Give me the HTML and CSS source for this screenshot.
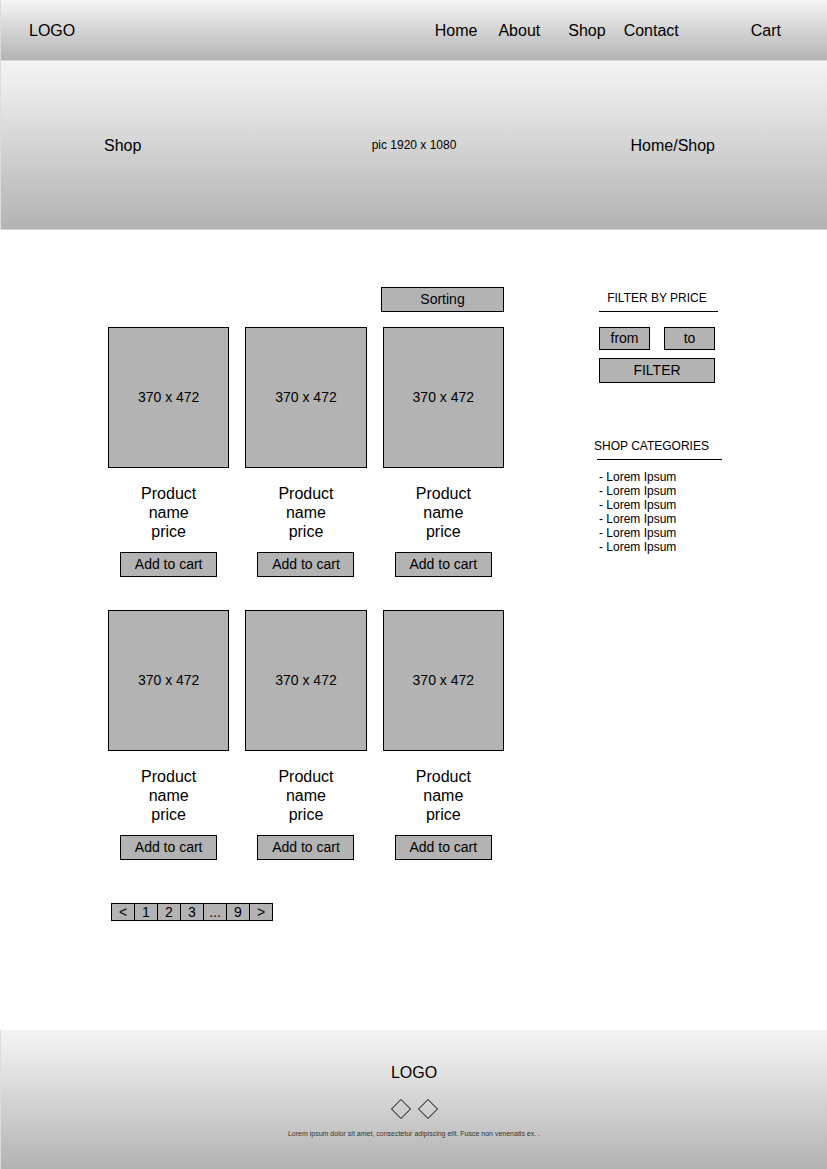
FILE: index.html
```html
<!DOCTYPE html>
<html lang="en">
<head>
  <meta charset="utf-8">
  <meta name="viewport" content="width=device-width, initial-scale=1">
  <title>Shop</title>
  <link rel="stylesheet" href="styles.css">
</head>
<body>
  <header class="site-header">
    <a class="logo" href="#">LOGO</a>
    <nav class="nav">
      <a class="nav-home" href="#">Home</a>
      <a href="#">About</a>
      <a class="nav-shop" href="#">Shop</a>
      <a href="#">Contact</a>
      <a class="nav-cart" href="#">Cart</a>
    </nav>
  </header>

  <section class="hero">
    <h1 class="hero-title">Shop</h1>
    <p class="hero-note">pic 1920 x 1080</p>
    <a class="hero-crumb" href="#">Home/Shop</a>
  </section>

  <main class="main">
    <section class="catalog">
      <select class="box sorting" aria-label="Sorting">
        <option>Sorting</option>
      </select>

      <div class="products">
        <article class="product">
          <div class="product-image">370 x 472</div>
          <p class="product-text">Product<br>name<br>price</p>
          <button class="box add" type="button">Add to cart</button>
        </article>
        <article class="product">
          <div class="product-image">370 x 472</div>
          <p class="product-text">Product<br>name<br>price</p>
          <button class="box add" type="button">Add to cart</button>
        </article>
        <article class="product">
          <div class="product-image">370 x 472</div>
          <p class="product-text">Product<br>name<br>price</p>
          <button class="box add" type="button">Add to cart</button>
        </article>
        <article class="product">
          <div class="product-image">370 x 472</div>
          <p class="product-text">Product<br>name<br>price</p>
          <button class="box add" type="button">Add to cart</button>
        </article>
        <article class="product">
          <div class="product-image">370 x 472</div>
          <p class="product-text">Product<br>name<br>price</p>
          <button class="box add" type="button">Add to cart</button>
        </article>
        <article class="product">
          <div class="product-image">370 x 472</div>
          <p class="product-text">Product<br>name<br>price</p>
          <button class="box add" type="button">Add to cart</button>
        </article>
      </div>

      <nav class="pages" aria-label="Pages">
        <a href="#">&lt;</a>
        <a href="#">1</a>
        <a href="#">2</a>
        <a href="#">3</a>
        <span>...</span>
        <a href="#">9</a>
        <a href="#">&gt;</a>
      </nav>
    </section>

    <aside class="sidebar">
      <section class="filter">
        <h2 class="side-title">FILTER BY PRICE</h2>
        <hr class="rule">
        <form class="filter-form">
          <input class="box" type="text" placeholder="from" aria-label="from">
          <input class="box" type="text" placeholder="to" aria-label="to">
          <button class="box filter-button" type="button">FILTER</button>
        </form>
      </section>

      <section class="categories">
        <h2 class="side-title">SHOP CATEGORIES</h2>
        <hr class="rule">
        <ul class="category-list">
          <li><a href="#">- Lorem Ipsum</a></li>
          <li><a href="#">- Lorem Ipsum</a></li>
          <li><a href="#">- Lorem Ipsum</a></li>
          <li><a href="#">- Lorem Ipsum</a></li>
          <li><a href="#">- Lorem Ipsum</a></li>
          <li><a href="#">- Lorem Ipsum</a></li>
        </ul>
      </section>
    </aside>
  </main>

  <footer class="site-footer">
    <a class="logo" href="#">LOGO</a>
    <div class="socials">
      <svg class="diamond" viewBox="0 0 20 20" aria-hidden="true"><path d="M10 .5 19.5 10 10 19.5 .5 10Z"/></svg>
      <svg class="diamond" viewBox="0 0 20 20" aria-hidden="true"><path d="M10 .5 19.5 10 10 19.5 .5 10Z"/></svg>
    </div>
    <p class="footer-note">Lorem ipsum dolor sit amet, consectetur adipiscing elit. Fusce non venenatis ex. .</p>
  </footer>
</body>
</html>
```

FILE: styles.css
```css
* {
  box-sizing: border-box;
}

body {
  display: flex;
  flex-direction: column;
  min-height: 100vh;
  margin: 0;
  background: #fff;
  color: #000;
  font-family: "Liberation Sans", Arial, sans-serif;
  font-size: 16px;
  line-height: 19px;
}

h1,
h2,
p,
ul {
  margin: 0;
  padding: 0;
  font-weight: 400;
}

a {
  color: inherit;
  text-decoration: none;
}

.site-header,
.hero,
.site-footer {
  border-left: 1px solid #dcdcdc;
  background: linear-gradient(#f5f5f5, #b3b3b3);
}

.site-header {
  display: flex;
  align-items: center;
  justify-content: space-between;
  min-height: 60px;
  padding: 0 46px 0 28px;
}

.nav {
  display: flex;
  gap: 18px;
}

.nav-home {
  margin-right: 3px;
}

.nav-shop {
  margin-left: 10px;
}

.nav-cart {
  margin-left: 54px;
}

.hero {
  display: grid;
  grid-template-columns: 1fr auto 1fr;
  align-items: center;
  min-height: 170px;
  border-top: 1px solid #d6d6d6;
  border-bottom: 1px solid #d6d6d6;
}

.hero-title {
  padding-left: 103px;
  font-size: 16px;
}

.hero-note {
  font-size: 12px;
}

.hero-crumb {
  padding-right: 112px;
  text-align: right;
}

.main {
  display: grid;
  flex: 1;
  grid-template-columns: minmax(0, 396fr) minmax(0, 128fr);
  align-items: start;
  gap: 90px;
  padding: 57px 105px 109px 108px;
}

.catalog {
  display: flex;
  flex-direction: column;
}

.box {
  height: 25px;
  margin: 0;
  padding: 0 0 2px;
  border: 1px solid #000;
  border-radius: 0;
  background: #b3b3b3;
  color: #000;
  font-family: inherit;
  font-size: 14px;
  text-align: center;
  appearance: none;
}

.sorting {
  width: 123px;
  align-self: flex-end;
  text-align-last: center;
}

.products {
  display: grid;
  grid-template-columns: repeat(3, minmax(0, 1fr));
  gap: 33px 16px;
  margin-top: 15px;
}

.product {
  display: flex;
  flex-direction: column;
  align-items: center;
}

.product-image {
  display: flex;
  align-items: center;
  justify-content: center;
  width: 100%;
  height: 141px;
  border: 1px solid #000;
  background: #b3b3b3;
  font-size: 14px;
}

.product-text {
  margin: 16px 0 11px;
  text-align: center;
}

.add {
  width: 97px;
}

.pages {
  display: flex;
  margin: 43px 0 0 3px;
  font-size: 14px;
  line-height: 16px;
}

.pages > * {
  width: 24px;
  margin-right: -1px;
  border: 1px solid #000;
  background: #b3b3b3;
  text-align: center;
}

.side-title {
  font-size: 12px;
  line-height: 22px;
}

.rule {
  margin: 2px 0 0;
  border: 0;
  border-top: 1px solid #000;
}

.filter {
  margin: 0 7px 0 5px;
  text-align: center;
}

.filter .rule {
  margin-right: -3px;
}

.filter-form {
  display: grid;
  grid-template-columns: 1fr 1fr;
  gap: 8px 14px;
  margin-top: 15px;
}

.filter-form input {
  width: 100%;
  height: 23px;
}

.filter-form input::placeholder {
  color: #000;
  opacity: 1;
}

.filter-button {
  grid-column: 1 / -1;
}

.categories {
  margin-top: 52px;
}

.categories .rule {
  margin-left: 3px;
}

.category-list {
  margin-top: 10px;
  padding-left: 5px;
  font-size: 12px;
  line-height: 14px;
  list-style: none;
}

.site-footer {
  display: flex;
  flex-direction: column;
  align-items: center;
  padding: 33px 16px 31px;
}

.socials {
  display: flex;
  gap: 7px;
  margin: 17px 0 11px;
}

.diamond {
  display: block;
  width: 20px;
  height: 20px;
  fill: none;
  stroke: #000;
}

.footer-note {
  color: #333;
  font-size: 7px;
  line-height: 8px;
  text-align: center;
}
```
